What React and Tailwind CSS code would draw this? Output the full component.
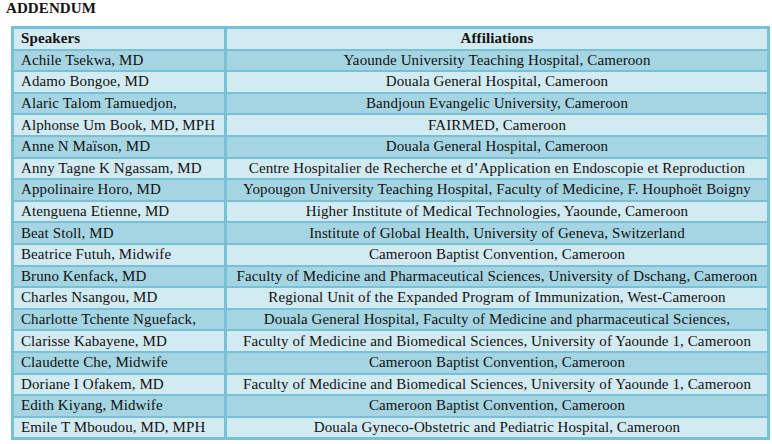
const rows = [
  ['Achile Tsekwa, MD', 'Yaounde University Teaching Hospital, Cameroon'],
  ['Adamo Bongoe, MD', 'Douala General Hospital, Cameroon'],
  ['Alaric Talom Tamuedjon,', 'Bandjoun Evangelic University, Cameroon'],
  ['Alphonse Um Book, MD, MPH', 'FAIRMED, Cameroon'],
  ['Anne N Maïson, MD', 'Douala General Hospital, Cameroon'],
  ['Anny Tagne K Ngassam, MD', 'Centre Hospitalier de Recherche et d’Application en Endoscopie et Reproduction'],
  ['Appolinaire Horo, MD', 'Yopougon University Teaching Hospital, Faculty of Medicine, F. Houphoët Boigny'],
  ['Atenguena Etienne, MD', 'Higher Institute of Medical Technologies, Yaounde, Cameroon'],
  ['Beat Stoll, MD', 'Institute of Global Health, University of Geneva, Switzerland'],
  ['Beatrice Futuh, Midwife', 'Cameroon Baptist Convention, Cameroon'],
  ['Bruno Kenfack, MD', 'Faculty of Medicine and Pharmaceutical Sciences, University of Dschang, Cameroon'],
  ['Charles Nsangou, MD', 'Regional Unit of the Expanded Program of Immunization, West-Cameroon'],
  ['Charlotte Tchente Nguefack,', 'Douala General Hospital, Faculty of Medicine and pharmaceutical Sciences,'],
  ['Clarisse Kabayene, MD', 'Faculty of Medicine and Biomedical Sciences, University of Yaounde 1, Cameroon'],
  ['Claudette Che, Midwife', 'Cameroon Baptist Convention, Cameroon'],
  ['Doriane I Ofakem, MD', 'Faculty of Medicine and Biomedical Sciences, University of Yaounde 1, Cameroon'],
  ['Edith Kiyang, Midwife', 'Cameroon Baptist Convention, Cameroon'],
  ['Emile T Mboudou, MD, MPH', 'Douala Gyneco-Obstetric and Pediatric Hospital, Cameroon'],
];

export default function App() {
  return (
    <div className="w-[772px] h-[444px] bg-white text-[#111] overflow-hidden font-['Liberation_Serif','Times_New_Roman',serif] tracking-[0.1px]">
      <div className="pl-[6px] text-[15px] leading-[17px] font-bold">ADDENDUM</div>

      <div className="ml-[11px] mt-[9px] w-[759px] bg-[#78C0D4] p-[3px] grid grid-cols-[210px_1fr] gap-x-[3px] gap-y-[2px] text-[15px] leading-[17px]">
        {/* header */}
        <div className="h-[19.6px] bg-[#D2EAF1] pl-[7px] flex items-center font-bold">Speakers</div>
        <div className="h-[19.6px] bg-[#D2EAF1] flex items-center justify-center font-bold">Affiliations</div>

        {rows.map(([name, aff], i) => {
          const bg = i % 2 === 0 ? 'bg-[#A5D5E2]' : 'bg-[#D2EAF1]';
          return [
            <div key={'n' + i} className={`h-[19.6px] ${bg} pl-[7px] flex items-center whitespace-nowrap overflow-hidden`}>{name}</div>,
            <div key={'a' + i} className={`h-[19.6px] ${bg} flex items-center justify-center whitespace-nowrap overflow-hidden`}>{aff}</div>,
          ];
        })}
      </div>
    </div>
  );
}
